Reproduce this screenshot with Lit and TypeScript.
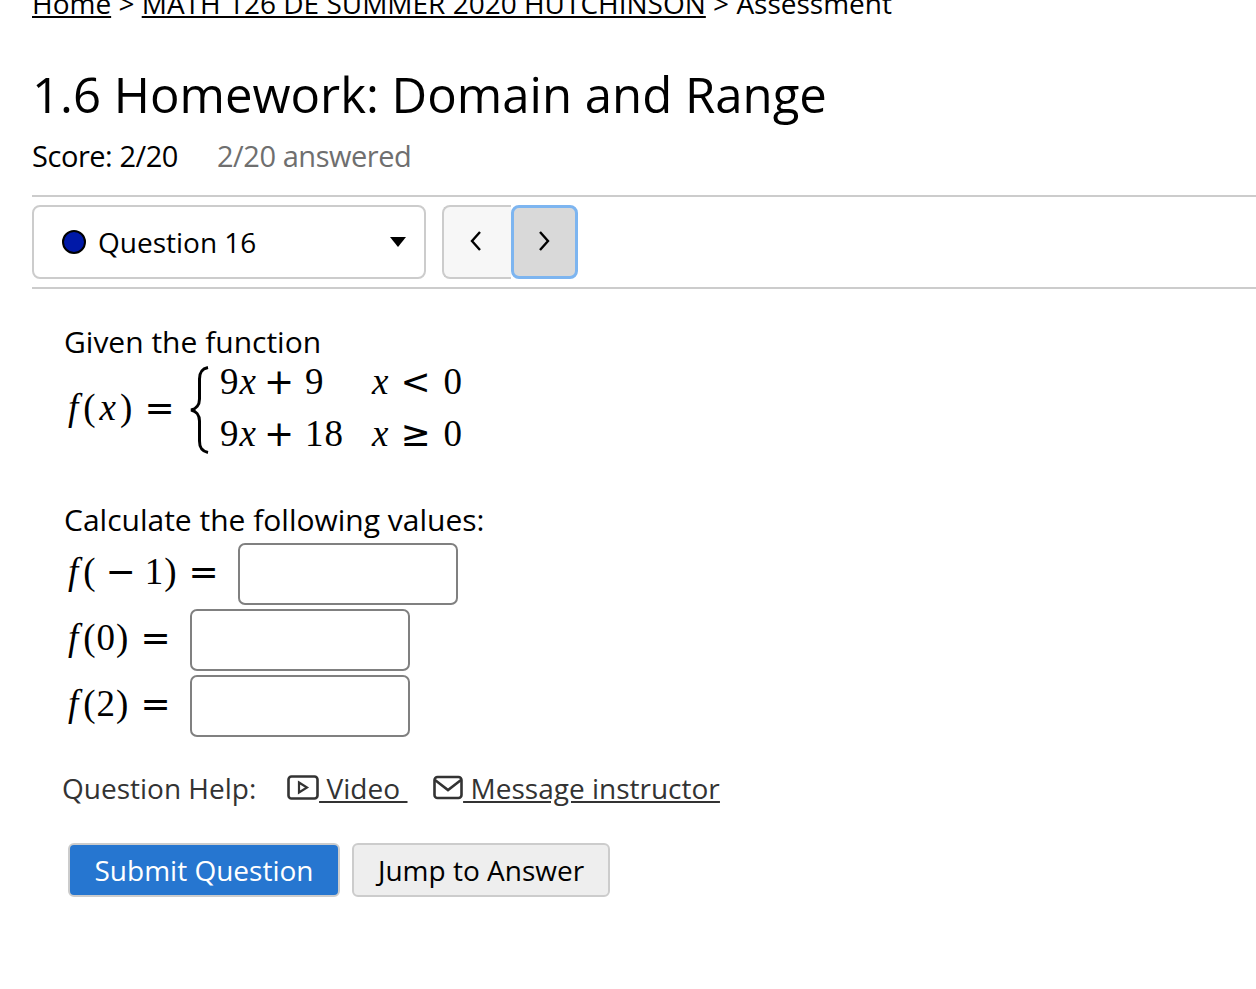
import { LitElement, html, css } from "lit";
import { customElement } from "lit/decorators.js";

@customElement("app-root")
export class AppRoot extends LitElement {
  static styles = css`
    :host { display: block; height: 989px; overflow: hidden; background: #fff; color: #000; font-family: "Open Sans", "Noto Sans", sans-serif; }
    .page { padding-left: 32px; margin-top: -15px; }
    .crumbs { height: 36px; line-height: 36px; font-size: 28px; white-space: nowrap; }
    .crumbs a { color: #000; text-decoration: underline; }
    h1 { margin: 38px 0 0 0; height: 70px; line-height: 70px; font-size: 49.1px; font-weight: 400; white-space: nowrap; }
    .score { height: 40px; margin-top: 7px; line-height: 40px; font-size: 29px; display: flex; gap: 39px; letter-spacing: -0.45px; }
    .score span:last-child { color: #6f6f6f; }
    .bar { margin-top: 19px; border-top: 2px solid #ccc; border-bottom: 2px solid #ccc; height: 94px; padding: 8px 0; box-sizing: border-box; display: flex; gap: 16px; }
    .sel { width: 394px; height: 74px; box-sizing: border-box; border: 2px solid #ccc; border-radius: 8px; display: flex; align-items: center; padding: 0 18px 0 28px; font-size: 28px; }
    .dot { width: 20px; height: 20px; border-radius: 50%; background: #0019a8; border: 2px solid #000; margin-right: 12px; flex: none; }
    .sel .lbl { flex: 1; }
    .caret { width: 0; height: 0; border-left: 8px solid transparent; border-right: 8px solid transparent; border-top: 10px solid #000; }
    .nav { display: flex; height: 74px; }
    .nav button { padding: 0 0 2px 0; margin: 0; display: flex; align-items: center; justify-content: center; box-sizing: border-box; }
    .prev { width: 69px; background: #f7f7f7; border: 2px solid #ccc; border-right: none; border-radius: 8px 0 0 8px; padding-right: 4px !important; }
    .next { width: 67px; background: #d9d9d9; border: 3px solid #7db5f0; border-radius: 8px; padding-right: 2px !important; }
    .q { padding: 33px 0 0 32px; font-size: 30px; }
    .line { line-height: 40px; height: 40px; white-space: nowrap; }
    .math { font-family: "Liberation Serif", "DejaVu Serif", serif; font-size: 37px; letter-spacing: 1px; }
    .math i { font-style: italic; padding: 0 3px; }
    .math i.fn { padding: 0 4px 0 2px; }
    .math .op { font-family: "DejaVu Sans", sans-serif; font-size: 36px; font-weight: 400; letter-spacing: 0; }
    .math .plus { margin: 0 11px 0 5px; }
    .math .rel { margin: 0 13px 0 9px; }
    .math .eq { margin: 0 0 0 11px; }
    .math .minus { margin: 0 9px; }
    .piece { display: flex; align-items: center; height: 104px; margin-top: -7px; padding-left: 2px; }
    .fx { width: 123px; white-space: nowrap; }
    .brace { width: 30px; height: 88px; flex: none; margin: 6px 1px 0 0; }
    .cases { display: grid; grid-template-columns: 152px auto; grid-auto-rows: 52px; align-items: center; }
    .cases span { white-space: nowrap; }
    .math .cases i { padding: 0 2px 0 0; }
    .calc { margin-top: 41px; }
    .rows { display: flex; flex-direction: column; gap: 4px; margin-top: 3px; }
    .row { display: flex; align-items: center; height: 62px; padding-left: 2px; }
    .row .lab { white-space: nowrap; padding-bottom: 6px; }
    .row.a .lab { width: 172px; }
    .row.b .lab { width: 124px; }
    .row input { width: 220px; height: 62px; box-sizing: border-box; border: 2px solid #808080; border-radius: 7px; background: #fff; padding: 0; margin: 0; }
    .help { display: flex; align-items: center; margin: 29px 0 0 -2px; height: 44px; font-size: 28px; color: #333; white-space: nowrap; }
    .help a { color: #333; text-decoration: underline; display: flex; align-items: center; }
    .help svg { flex: none; }
    .help .t { text-decoration: underline; white-space: pre; }
    .help .l1 { margin-left: 31px; }
    .help .l2 { margin-left: 26px; }
    .btns { display: flex; gap: 12px; margin: 33px 0 0 4px; }
    .btns button { height: 54px; box-sizing: border-box; border-radius: 6px; font: inherit; font-size: 28px; padding: 0; }
    .submit { width: 272px; background: #2676d0; color: #fff; border: 2px solid #ccc; }
    .jump { width: 258px; background: #eee; color: #000; border: 2px solid #ccc; }
  `;

  render() {
    return html`
      <div class="page">
        <div class="crumbs"><a href="#">Home</a> &gt; <a href="#">MATH 126 DE SUMMER 2020 HUTCHINSON</a> &gt; Assessment</div>
        <h1>1.6 Homework: Domain and Range</h1>
        <div class="score"><span>Score: 2/20</span><span>2/20 answered</span></div>
        <div class="bar">
          <div class="sel"><span class="dot"></span><span class="lbl">Question 16</span><span class="caret"></span></div>
          <div class="nav">
            <button class="prev" aria-label="Previous"><svg width="14" height="22" viewBox="0 0 14 22"><path d="M11 2 L3 11 L11 20" fill="none" stroke="#000" stroke-width="2.4"/></svg></button>
            <button class="next" aria-label="Next"><svg width="14" height="22" viewBox="0 0 14 22"><path d="M3 2 L11 11 L3 20" fill="none" stroke="#000" stroke-width="2.4"/></svg></button>
          </div>
        </div>
        <div class="q">
          <div class="line">Given the function</div>
          <div class="piece math">
            <span class="fx"><i class="fn">f</i>(<i>x</i>)<span class="op eq">=</span></span>
            <svg class="brace" viewBox="0 0 30 88"><path d="M19 1.5 C12 3 10.5 7 10.5 13 L10.5 33 C10.5 39 7 43 2 44 C7 45 10.5 49 10.5 55 L10.5 75 C10.5 81 12 85 19 86.5" fill="none" stroke="#000" stroke-width="3"/></svg>
            <div class="cases">
              <span>9<i>x</i><span class="op plus">+</span>9</span><span><i>x</i><span class="op rel">&lt;</span>0</span>
              <span>9<i>x</i><span class="op plus">+</span>18</span><span><i>x</i><span class="op rel">≥</span>0</span>
            </div>
          </div>
          <div class="line calc">Calculate the following values:</div>
          <div class="rows">
            <div class="row a math"><span class="lab"><i class="fn">f</i>(<span class="op minus">−</span>1)<span class="op eq">=</span></span><input aria-label="f(-1)" /></div>
            <div class="row b math"><span class="lab"><i class="fn">f</i>(0)<span class="op eq">=</span></span><input aria-label="f(0)" /></div>
            <div class="row b math"><span class="lab"><i class="fn">f</i>(2)<span class="op eq">=</span></span><input aria-label="f(2)" /></div>
          </div>
          <div class="help">
            <span>Question Help:</span>
            <a class="l1" href="#"><svg width="32" height="26" viewBox="0 0 32 26"><rect x="1.5" y="1.5" width="29" height="22" rx="3" fill="none" stroke="#333" stroke-width="2.6"/><path d="M12 7.5 L20 12.5 L12 17.5 Z" fill="none" stroke="#333" stroke-width="2.2"/></svg><span class="t"> Video </span></a>
            <a class="l2" href="#"><svg width="30" height="26" viewBox="0 0 30 26"><rect x="1.5" y="2" width="27" height="21" rx="3" fill="none" stroke="#333" stroke-width="2.6"/><path d="M2 5 L15 15 L28 5" fill="none" stroke="#333" stroke-width="2.6"/></svg><span class="t"> Message instructor</span></a>
          </div>
          <div class="btns">
            <button class="submit">Submit Question</button>
            <button class="jump">Jump to Answer</button>
          </div>
        </div>
      </div>
    `;
  }
}
